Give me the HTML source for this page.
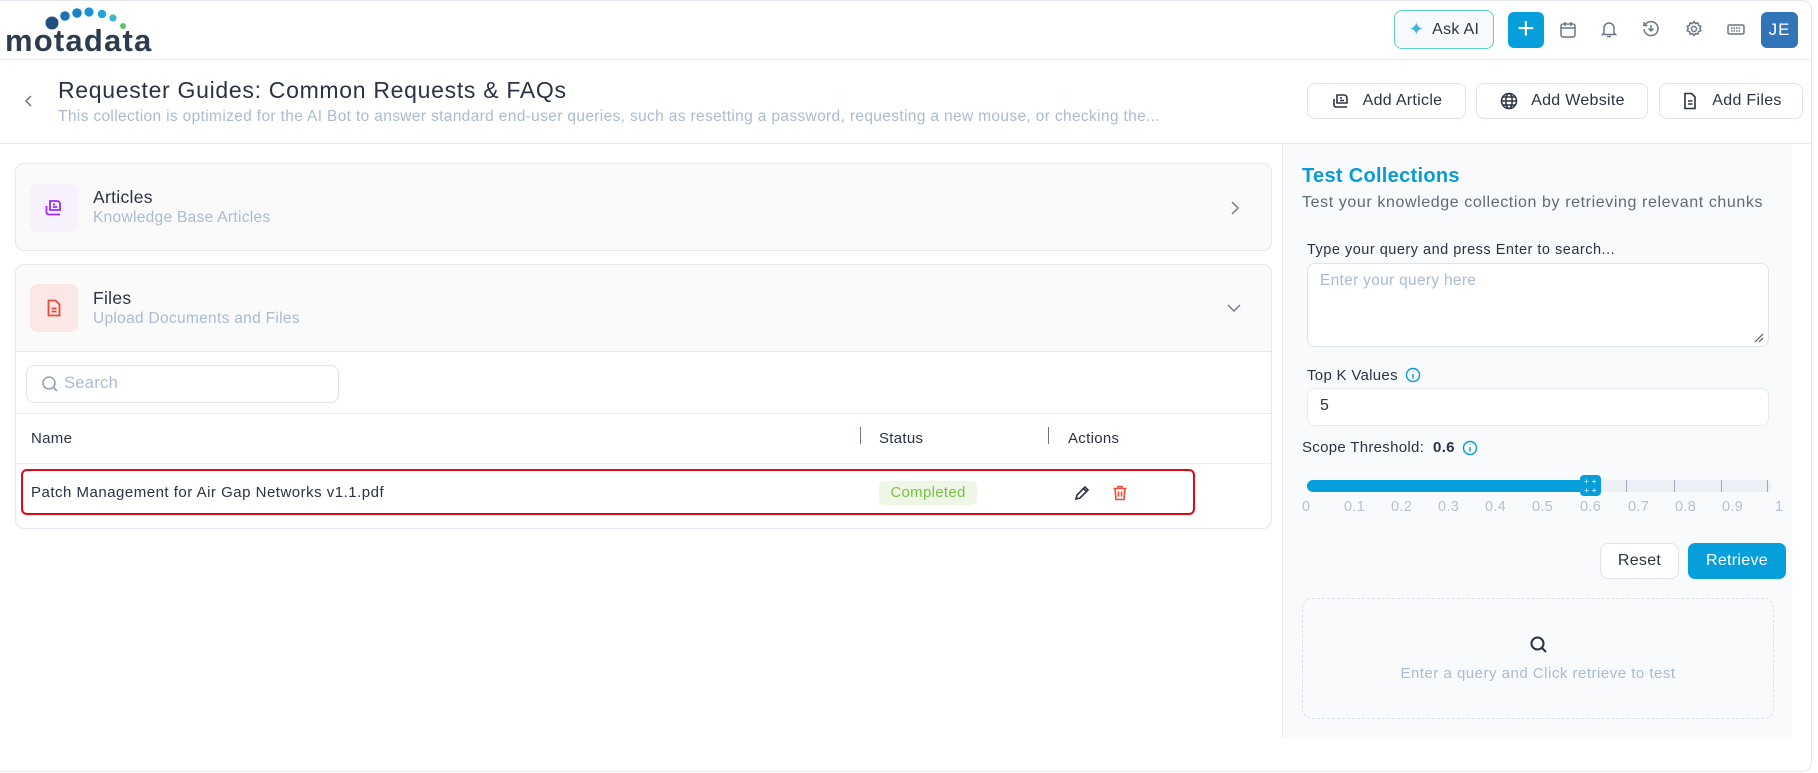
<!DOCTYPE html>
<html><head><meta charset="utf-8"><style>
*{box-sizing:border-box;margin:0;padding:0}
body{width:1818px;height:773px;background:#fff;font-family:"Liberation Sans",sans-serif;color:#1f2937;position:relative;overflow:hidden;letter-spacing:0.3px}
.a{position:absolute}
.btn{position:absolute;border:1px solid #dfe4ec;border-radius:8px;background:#fff;display:flex;align-items:center;justify-content:center;gap:12px;font-size:16px;color:#2b3443}
.ico{position:absolute;width:20px;height:20px}
</style></head><body>
<div class="a" style="left:0;top:0;width:1812px;height:772px;border:1px solid #e3e7ee;border-left:none;border-radius:0 10px 10px 0"></div>
<div class="a" style="left:0;top:59px;width:1812px;height:1px;background:#e3e7ee"></div>
<!-- logo -->
<svg class="a" style="left:0;top:0" width="160" height="58">
<circle cx="52" cy="23" r="6.5" fill="#24507e"/><circle cx="65" cy="16" r="4.8" fill="#1f6fb5"/><circle cx="77" cy="13" r="4.8" fill="#1b82c7"/><circle cx="89" cy="12" r="4.6" fill="#1a90d4"/><circle cx="102" cy="14" r="4.2" fill="#22a4dc"/><circle cx="113" cy="18" r="3.6" fill="#3ab7c9"/><circle cx="123" cy="26" r="3" fill="#5cc46a"/>
<text x="5" y="51" font-family="Liberation Sans" font-size="31" font-weight="bold" fill="#2d3d4e" letter-spacing="1.2">motadata</text>
</svg>
<!-- top right -->
<div class="btn" style="left:1394px;top:10px;width:100px;height:39px;border-color:#5fd3c4;background:#f7f9fc;gap:8px;font-size:16px"><span style="color:#3fb5d8;font-size:18px">✦</span>Ask AI</div>
<div class="a" style="left:1508px;top:12px;width:36px;height:36px;background:#069fdc;border-radius:6px;color:#fff;font-size:30px;line-height:34px;text-align:center">+</div>
<svg class="ico" style="left:1558px;top:20px" viewBox="0 0 20 20" fill="none" stroke="#6b7686" stroke-width="1.5"><rect x="3" y="4" width="14" height="13" rx="2"/><path d="M3 8h14M7 2v4M13 2v4"/></svg>
<svg class="ico" style="left:1599px;top:19px" viewBox="0 0 20 20" fill="none" stroke="#6b7686" stroke-width="1.5"><path d="M5 14V9a5 5 0 0110 0v5l1.5 1.5h-13zM8 17.5h4"/></svg>
<svg class="ico" style="left:1641px;top:19px" viewBox="0 0 20 20" fill="none" stroke="#6b7686" stroke-width="1.5"><path d="M4 6a7 7 0 11-1 4M3 3v3.5h3.5M10 6v6M7.5 9.5L10 12l2.5-2.5"/></svg>
<svg class="ico" style="left:1684px;top:19px" viewBox="0 0 20 20" fill="none" stroke="#6b7686" stroke-width="1.5"><circle cx="10" cy="10" r="2.5"/><path d="M10 2.5l1.5 2 2.4-.6.6 2.4 2.3 1-1 2.2 1 2.2-2.3 1-.6 2.4-2.4-.6-1.5 2-1.5-2-2.4.6-.6-2.4-2.3-1 1-2.2-1-2.2 2.3-1 .6-2.4 2.4.6z"/></svg>
<svg class="ico" style="left:1726px;top:19px" viewBox="0 0 20 20" fill="none" stroke="#6b7686" stroke-width="1.5"><rect x="2" y="6" width="16" height="9" rx="1.5"/><path d="M5 9h10M5 12h10" stroke-dasharray="1.5 1"/></svg>
<div class="a" style="left:1761px;top:12px;width:37px;height:36px;background:#3274b8;border-radius:6px;color:#fff;font-size:17px;line-height:36px;text-align:center;letter-spacing:1px">JE</div>
<!-- header -->
<svg class="a" style="left:23px;top:94px" width="12" height="14" fill="none" stroke="#6b7686" stroke-width="1.5"><path d="M8 2L3 7l5 5"/></svg>
<div class="a" style="left:58px;top:77px;font-size:23px;color:#2a3344;letter-spacing:0.7px">Requester Guides: Common Requests &amp; FAQs</div>
<div class="a" style="left:58px;top:108px;font-size:15.5px;color:#a9bbd0;letter-spacing:0.35px">This collection is optimized for the AI Bot to answer standard end-user queries, such as resetting a password, requesting a new mouse, or checking the...</div>
<div class="btn" style="left:1307px;top:83px;width:159px;height:36px"><svg width="20" height="20" viewBox="0 0 20 20" fill="none" stroke="#2b3443" stroke-width="1.6"><path d="M6 4h7a3 3 0 013 3v5H6zM9 7h2M9 9.5h4M3 8v6a2 2 0 002 2h11"/></svg>Add Article</div>
<div class="btn" style="left:1476px;top:83px;width:172px;height:36px"><svg width="20" height="20" viewBox="0 0 20 20" fill="none" stroke="#2b3443" stroke-width="1.5"><circle cx="10" cy="10" r="7.5"/><ellipse cx="10" cy="10" rx="3.2" ry="7.5"/><path d="M2.5 10h15M4 6h12M4 14h12"/></svg>Add Website</div>
<div class="btn" style="left:1659px;top:83px;width:144px;height:36px"><svg width="20" height="20" viewBox="0 0 20 20" fill="none" stroke="#2b3443" stroke-width="1.6"><path d="M5 2.5h6.5l3.5 3.5v11.5H5zM8 10h4.5M8 13h4.5"/></svg>Add Files</div>
<div class="a" style="left:0;top:143px;width:1812px;height:1px;background:#e3e7ee"></div>
<!-- articles card -->
<div class="a" style="left:15px;top:163px;width:1257px;height:88px;background:#fafafa;border:1px solid #e3e7ee;border-radius:9px"></div>
<div class="a" style="left:30px;top:184px;width:48px;height:48px;background:#f7f1fe;border-radius:8px"></div>
<svg class="a" style="left:44px;top:198px" width="20" height="20" viewBox="0 0 20 20" fill="none" stroke="#9a2df0" stroke-width="1.8"><path d="M6 3h7a3 3 0 013 3v6H6zM9 6.5h2M9 9h4M2.5 8v6.5a2 2 0 002 2h11.5"/></svg>
<div class="a" style="left:93px;top:187px;font-size:17.5px;color:#2a3344">Articles</div>
<div class="a" style="left:93px;top:209px;font-size:15.5px;color:#a9bbd0">Knowledge Base Articles</div>
<svg class="a" style="left:1228px;top:200px" width="14" height="16" fill="none" stroke="#6b7686" stroke-width="1.4"><path d="M4 2l6 6-6 6"/></svg>
<!-- files card -->
<div class="a" style="left:15px;top:264px;width:1257px;height:265px;background:#fff;border:1px solid #e3e7ee;border-radius:9px;overflow:hidden">
<div style="height:87px;background:#fafafa;border-bottom:1px solid #e3e7ee"></div></div>
<div class="a" style="left:30px;top:284px;width:48px;height:48px;background:#fbe8e6;border-radius:8px"></div>
<svg class="a" style="left:44px;top:298px" width="20" height="20" viewBox="0 0 20 20" fill="none" stroke="#ec4a3c" stroke-width="1.8"><path d="M4.5 2.5h7l4 4v11h-11zM7.5 10.5h5M7.5 13.5h5"/></svg>
<div class="a" style="left:93px;top:288px;font-size:17.5px;color:#2a3344">Files</div>
<div class="a" style="left:93px;top:310px;font-size:15.5px;color:#a9bbd0">Upload Documents and Files</div>
<svg class="a" style="left:1226px;top:302px" width="16" height="12" fill="none" stroke="#6b7686" stroke-width="1.4"><path d="M2 3l6 6 6-6"/></svg>
<div class="a" style="left:26px;top:365px;width:313px;height:38px;border:1px solid #dfe4ec;border-radius:8px"></div>
<svg class="a" style="left:41px;top:375px" width="18" height="18" fill="none" stroke="#94a3b8" stroke-width="1.6"><circle cx="8" cy="8" r="6"/><path d="M12.5 12.5L16 16"/></svg>
<div class="a" style="left:64px;top:374px;font-size:16.5px;color:#a9bbd0">Search</div>
<div class="a" style="left:15px;top:413px;width:1257px;height:1px;background:#e3e7ee"></div>
<div class="a" style="left:31px;top:430px;font-size:15px;color:#2a3344">Name</div>
<div class="a" style="left:860px;top:427px;width:1px;height:17px;background:#6b7686"></div>
<div class="a" style="left:879px;top:430px;font-size:15px;color:#2a3344">Status</div>
<div class="a" style="left:1048px;top:427px;width:1px;height:17px;background:#6b7686"></div>
<div class="a" style="left:1068px;top:430px;font-size:15px;color:#2a3344">Actions</div>
<div class="a" style="left:15px;top:463px;width:1257px;height:1px;background:#e9edf2"></div>
<div class="a" style="left:21px;top:469px;width:1174px;height:46px;border:2.5px solid #e30613;border-radius:6px"></div>
<div class="a" style="left:31px;top:484px;font-size:15px;color:#2a3344;letter-spacing:0.5px">Patch Management for Air Gap Networks v1.1.pdf</div>
<div class="a" style="left:879px;top:481px;width:98px;height:24px;background:#eef7e6;border-radius:5px;color:#7ac143;font-size:15px;line-height:24px;text-align:center">Completed</div>
<svg class="a" style="left:1073px;top:484px" width="18" height="18" viewBox="0 0 18 18" fill="none" stroke="#2a3344" stroke-width="1.6"><path d="M3 15l1-4 8-8 3 3-8 8zM10.5 4.5l3 3"/></svg>
<svg class="a" style="left:1111px;top:484px" width="18" height="18" viewBox="0 0 18 18" fill="none" stroke="#ec4a3c" stroke-width="1.6"><path d="M2.5 4.5h13M7 4.5V2.5h4v2M4 4.5l1 11h8l1-11M7.5 7.5v5M10.5 7.5v5"/></svg>
<!-- right panel -->
<div class="a" style="left:1282px;top:144px;width:510px;height:594px;background:#f8fafc;border-left:1px solid #e6eaf0"></div>
<div class="a" style="left:1302px;top:165px;font-size:20px;font-weight:bold;color:#0a9ad6">Test Collections</div>
<div class="a" style="left:1302px;top:194px;font-size:16px;color:#5f6b7b;letter-spacing:0.6px">Test your knowledge collection by retrieving relevant chunks</div>
<div class="a" style="left:1307px;top:242px;font-size:14.5px;color:#2a3344;letter-spacing:0.5px">Type your query and press Enter to search...</div>
<div class="a" style="left:1307px;top:263px;width:462px;height:84px;background:#fff;border:1px solid #dfe4ec;border-radius:8px"></div>
<div class="a" style="left:1320px;top:272px;font-size:15.5px;color:#a9bbd0">Enter your query here</div>
<svg class="a" style="left:1754px;top:333px" width="10" height="10" stroke="#555" stroke-width="1.2"><path d="M1 9L9 1M5 9L9 5"/></svg>
<div class="a" style="left:1307px;top:367px;font-size:15px;color:#2a3344">Top K Values</div>
<svg class="a" style="left:1405px;top:367px" width="16" height="16" fill="none" stroke="#0a9ad6" stroke-width="1.4"><circle cx="8" cy="8" r="6.5"/><path d="M8 7v4.5M8 4.5v.5"/></svg>
<div class="a" style="left:1307px;top:388px;width:462px;height:38px;background:#fff;border:1px solid #e6eaf0;border-radius:8px"></div>
<div class="a" style="left:1320px;top:397px;font-size:16px;color:#2a3344">5</div>
<div class="a" style="left:1302px;top:439px;font-size:15px;color:#2a3344">Scope Threshold: &nbsp;<b>0.6</b></div>
<svg class="a" style="left:1462px;top:440px" width="16" height="16" fill="none" stroke="#0a9ad6" stroke-width="1.4"><circle cx="8" cy="8" r="6.5"/><path d="M8 7v4.5M8 4.5v.5"/></svg>
<div class="a" style="left:1307px;top:480px;width:465px;height:12px;background:#eceff4;border-radius:6px"></div>
<div class="a" style="left:1307px;top:480px;width:285px;height:12px;background:#069fdc;border-radius:6px"></div>
<div class="a" style="left:1626px;top:480px;width:1px;height:12px;background:#9aa8ba"></div>
<div class="a" style="left:1674px;top:480px;width:1px;height:12px;background:#9aa8ba"></div>
<div class="a" style="left:1721px;top:480px;width:1px;height:12px;background:#9aa8ba"></div>
<div class="a" style="left:1767px;top:480px;width:1px;height:12px;background:#9aa8ba"></div>
<div class="a" style="left:1580px;top:475px;width:21px;height:21px;background:#069fdc;border-radius:4px;color:#fff;font-size:8px;line-height:9px;text-align:center;padding-top:2px">+ +<br>+ +</div>
<div class="a" style="left:1302px;top:499px;width:480px;font-size:14.5px;color:#b4c2d3">
<span class="a" style="left:0">0</span><span class="a" style="left:42px">0.1</span><span class="a" style="left:89px">0.2</span><span class="a" style="left:136px">0.3</span><span class="a" style="left:183px">0.4</span><span class="a" style="left:230px">0.5</span><span class="a" style="left:278px">0.6</span><span class="a" style="left:326px">0.7</span><span class="a" style="left:373px">0.8</span><span class="a" style="left:420px">0.9</span><span class="a" style="left:473px">1</span></div>
<div class="btn" style="left:1600px;top:543px;width:79px;height:36px;font-size:16px">Reset</div>
<div class="a" style="left:1688px;top:543px;width:98px;height:36px;background:#069fdc;border-radius:7px;color:#fff;font-size:16px;line-height:36px;text-align:center">Retrieve</div>
<div class="a" style="left:1302px;top:598px;width:472px;height:121px;border:1px dashed #dbe1e9;border-radius:10px"></div>
<svg class="a" style="left:1529px;top:635px" width="20" height="20" fill="none" stroke="#2a3344" stroke-width="2"><circle cx="8.5" cy="8.5" r="6"/><path d="M13 13l4 4"/></svg>
<div class="a" style="left:1302px;top:665px;width:472px;text-align:center;font-size:15px;color:#a9bbd0;letter-spacing:0.5px">Enter a query and Click retrieve to test</div>
</body></html>
